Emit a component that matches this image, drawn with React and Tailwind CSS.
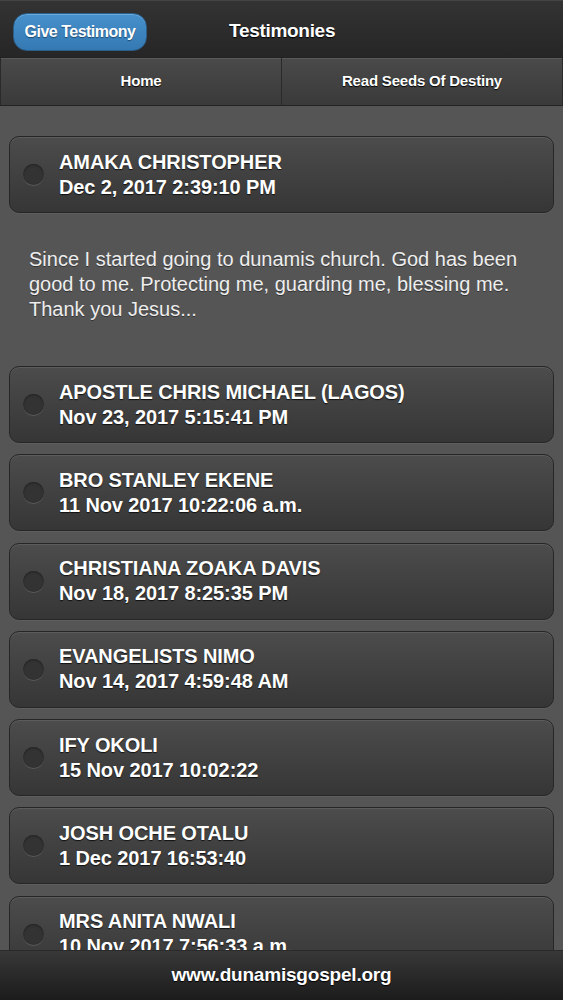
import React from 'react'

const items = [
  { name: 'APOSTLE CHRIS MICHAEL (LAGOS)', date: 'Nov 23, 2017 5:15:41 PM' },
  { name: 'BRO STANLEY EKENE', date: '11 Nov 2017 10:22:06 a.m.' },
  { name: 'CHRISTIANA ZOAKA DAVIS', date: 'Nov 18, 2017 8:25:35 PM' },
  { name: 'EVANGELISTS NIMO', date: 'Nov 14, 2017 4:59:48 AM' },
  { name: 'IFY OKOLI', date: '15 Nov 2017 10:02:22' },
  { name: 'JOSH OCHE OTALU', date: '1 Dec 2017 16:53:40' },
  { name: 'MRS ANITA NWALI', date: '10 Nov 2017 7:56:33 a.m.' },
]

function Card({ name, date }) {
  return (
    <div className="mx-[9px] h-[77px] shrink-0 rounded-[10px] border border-[#262626] bg-gradient-to-b from-[#4c4c4c] to-[#363636] shadow-[inset_0_1px_0_#5c5c5c,0_1px_0_#5e5e5e] flex items-center">
      <div className="ml-[13px] w-[21px] h-[21px] rounded-full bg-[#333] shadow-[0_1px_0_#5a5a5a,inset_0_1px_2px_#222]" />
      <div className="ml-[15px] flex flex-col text-[20px] leading-[25px] font-bold tracking-[-0.1px] text-white [text-shadow:0_1px_1px_#111]">
        <span>{name}</span>
        <span>{date}</span>
      </div>
    </div>
  )
}

export default function App() {
  return (
    <div className="h-[1000px] w-full overflow-hidden flex flex-col bg-[#555555] font-['Liberation_Sans',Arial,sans-serif]">
      <header className="h-[57px] shrink-0 flex items-center pt-[5px] bg-gradient-to-b from-[#333] to-[#262626] border-t border-[#444]">
        <button className="ml-[13px] h-[38px] w-[134px] rounded-[14px] bg-gradient-to-b from-[#4691cc] to-[#3579b2] border border-[#2a5f8c] text-white text-[16px] font-bold tracking-[-0.5px] [text-shadow:0_1px_1px_#1e4870] shadow-[inset_0_1px_0_#6aa9db]">
          Give Testimony
        </button>
        <h1 className="ml-[82px] text-white text-[19px] font-bold tracking-[-0.3px] [text-shadow:0_1px_1px_#000]">Testimonies</h1>
      </header>
      <nav className="h-[49px] shrink-0 grid grid-cols-2 border-y border-[#222] bg-[#2a2a2a] gap-px px-px">
        {['Home', 'Read Seeds Of Destiny'].map((t) => (
          <div key={t} className="flex items-center justify-center bg-gradient-to-b from-[#4a4a4a] to-[#3a3a3a] text-white text-[15px] font-bold tracking-[-0.2px] [text-shadow:0_1px_1px_#000] shadow-[inset_0_1px_0_#5a5a5a]">
            {t}
          </div>
        ))}
      </nav>
      <main className="flex-1 min-h-0 overflow-hidden flex flex-col pt-[30px]">
        <Card name="AMAKA CHRISTOPHER" date="Dec 2, 2017 2:39:10 PM" />
        <p className="px-[29px] pt-[34px] pb-[44px] text-[20px] leading-[25px] text-[#eeeeee] [text-shadow:0_1px_0_#333]">
          Since I started going to dunamis church. God has been good to me. Protecting me, guarding me, blessing me. Thank you Jesus...
        </p>
        <div className="flex flex-col gap-[11.3px]">
          {items.map((it) => (
            <Card key={it.name} {...it} />
          ))}
        </div>
      </main>
      <footer className="h-[50px] shrink-0 flex items-center justify-center bg-gradient-to-b from-[#383838] to-[#1c1c1c] border-t border-[#2a2a2a] text-white text-[19px] font-bold tracking-[-0.2px] [text-shadow:0_1px_1px_#000]">
        www.dunamisgospel.org
      </footer>
    </div>
  )
}
